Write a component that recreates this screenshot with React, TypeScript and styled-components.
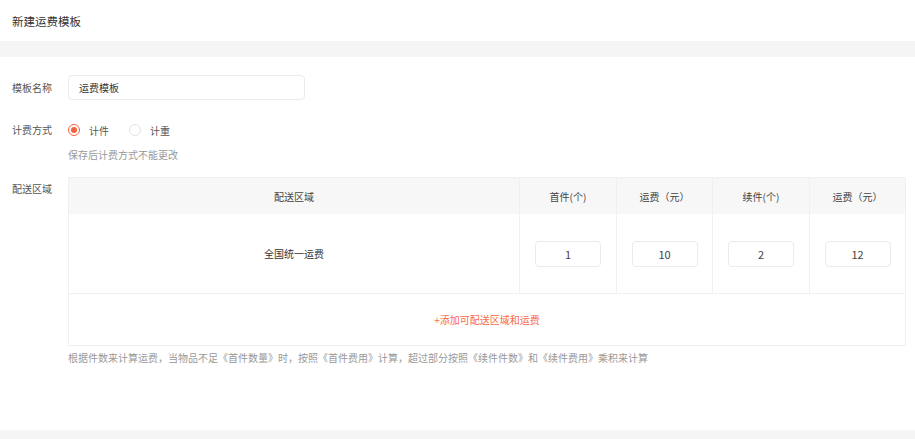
import React from "react";
import styled, { createGlobalStyle } from "styled-components";

const Global = createGlobalStyle`
  html, body { margin: 0; padding: 0; background: #fff; }
  body { font-family: "Noto Sans CJK SC", "Noto Sans", sans-serif; font-size: 10px; color: #333; }
  * { box-sizing: border-box; }
`;

const Page = styled.div`
  min-height: 439px;
  display: flex;
  flex-direction: column;
`;

const Header = styled.div`
  height: 41px;
  display: flex;
  align-items: center;
  padding-left: 12px;
  font-size: 11.5px;
  color: #333;
`;

const Band = styled.div<{ $h: number }>`
  height: ${(p) => p.$h}px;
  background: #f5f5f5;
  flex-shrink: 0;
`;

const Form = styled.div`
  flex: 1;
  padding: 18px 9px 0 12px;
  display: flex;
  flex-direction: column;
`;

const Row = styled.div<{ $mt?: number }>`
  display: flex;
  align-items: flex-start;
  margin-top: ${(p) => p.$mt ?? 0}px;
`;

const Label = styled.div<{ $lh: number }>`
  width: 56px;
  flex-shrink: 0;
  line-height: ${(p) => p.$lh}px;
  color: #555;
  font-size: 10px;
`;

const Field = styled.div`
  flex: 1;
  display: flex;
  flex-direction: column;
`;

const TextInput = styled.div`
  width: 237px;
  height: 25px;
  border: 1px solid #ebebeb;
  border-radius: 4px;
  padding-left: 10px;
  display: flex;
  align-items: center;
  color: #333;
`;

const RadioGroup = styled.div`
  display: flex;
  align-items: center;
  height: 20px;
  gap: 20px;
`;

const RadioItem = styled.div`
  display: flex;
  align-items: center;
  gap: 9px;
  color: #555;
`;

const RadioDot = styled.span<{ $on?: boolean }>`
  width: 12px;
  height: 12px;
  border-radius: 50%;
  border: 1px solid ${(p) => (p.$on ? "#f5603d" : "#e3e3e3")};
  display: inline-flex;
  align-items: center;
  justify-content: center;
  &::after {
    content: "";
    width: 6px;
    height: 6px;
    border-radius: 50%;
    background: ${(p) => (p.$on ? "#f5603d" : "transparent")};
  }
`;

const Hint = styled.div<{ $mt?: number }>`
  color: #999;
  font-size: 10px;
  line-height: 18px;
  margin-top: ${(p) => p.$mt ?? 0}px;
`;

const Table = styled.div`
  border: 1px solid #f0f0f0;
  display: grid;
  grid-template-columns: 1fr 97px 96px 97px 96px;
`;

const HeadCell = styled.div<{ $first?: boolean }>`
  height: 36px;
  background: #f7f7f7;
  display: flex;
  align-items: center;
  justify-content: center;
  border-left: ${(p) => (p.$first ? "none" : "1px solid #f0f0f0")};
  color: #444;
`;

const BodyCell = styled.div<{ $first?: boolean }>`
  height: 80px;
  display: flex;
  align-items: center;
  justify-content: center;
  border-left: ${(p) => (p.$first ? "none" : "1px solid #f0f0f0")};
  border-bottom: 1px solid #f0f0f0;
  color: #333;
`;

const NumBox = styled.div`
  width: 66px;
  height: 26px;
  border: 1px solid #ebebeb;
  border-radius: 4px;
  display: flex;
  align-items: center;
  justify-content: center;
  color: #444;
  font-size: 11px;
`;

const AddRow = styled.div`
  grid-column: 1 / -1;
  height: 51px;
  display: flex;
  align-items: center;
  justify-content: center;
  color: #f8694b;
  cursor: pointer;
`;

const heads = ["首件(个)", "运费（元）", "续件(个)", "运费（元）"];
const values = ["1", "10", "2", "12"];

export default function App() {
  return (
    <Page>
      <Global />
      <Header>新建运费模板</Header>
      <Band $h={16} />
      <Form>
        <Row>
          <Label $lh={25}>模板名称</Label>
          <Field>
            <TextInput>运费模板</TextInput>
          </Field>
        </Row>
        <Row $mt={20}>
          <Label $lh={20}>计费方式</Label>
          <Field>
            <RadioGroup>
              <RadioItem>
                <RadioDot $on />
                计件
              </RadioItem>
              <RadioItem>
                <RadioDot />
                计重
              </RadioItem>
            </RadioGroup>
            <Hint $mt={6}>保存后计费方式不能更改</Hint>
          </Field>
        </Row>
        <Row $mt={13}>
          <Label $lh={24}>配送区域</Label>
          <Field>
            <Table>
              <HeadCell $first>配送区域</HeadCell>
              {heads.map((h, i) => (
                <HeadCell key={i}>{h}</HeadCell>
              ))}
              <BodyCell $first>全国统一运费</BodyCell>
              {values.map((v, i) => (
                <BodyCell key={i}>
                  <NumBox>{v}</NumBox>
                </BodyCell>
              ))}
              <AddRow>+添加可配送区域和运费</AddRow>
            </Table>
            <Hint $mt={3}>
              根据件数来计算运费，当物品不足《首件数量》时，按照《首件费用》计算，超过部分按照《续件件数》和《续件费用》乘积来计算
            </Hint>
          </Field>
        </Row>
      </Form>
      <Band $h={9} />
    </Page>
  );
}
